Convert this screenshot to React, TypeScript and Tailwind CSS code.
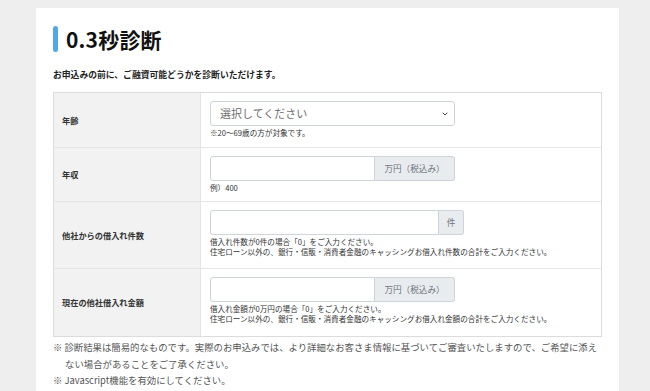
import { ChevronDown } from "lucide-react";

const FONT = "font-['Noto_Sans_CJK_JP','Noto_Sans',sans-serif]";

type Row = {
  label: string;
  height: string;
  kind: "select" | "input";
  inputWidth?: string;
  unit?: string;
  unitWidth?: string;
  help: string[];
};

const ROWS: Row[] = [
  { label: "年齢", height: "h-[54px]", kind: "select", help: ["※20～69歳の方が対象です。"] },
  {
    label: "年収",
    height: "h-[54px]",
    kind: "input",
    inputWidth: "w-[165px]",
    unit: "万円（税込み）",
    unitWidth: "w-[80px]",
    help: ["例）400"],
  },
  {
    label: "他社からの借入れ件数",
    height: "h-[67px]",
    kind: "input",
    inputWidth: "w-[229px]",
    unit: "件",
    unitWidth: "w-[25px]",
    help: [
      "借入れ件数が0件の場合「0」をご入力ください。",
      "住宅ローン以外の、銀行・信販・消費者金融のキャッシングお借入れ件数の合計をご入力ください。",
    ],
  },
  {
    label: "現在の他社借入れ金額",
    height: "h-[68px]",
    kind: "input",
    inputWidth: "w-[165px]",
    unit: "万円（税込み）",
    unitWidth: "w-[80px]",
    help: [
      "借入れ金額が0万円の場合「0」をご入力ください。",
      "住宅ローン以外の、銀行・信販・消費者金融のキャッシングお借入れ金額の合計をご入力ください。",
    ],
  },
];

const App = () => {
  return (
    <div className={`min-h-screen bg-[#eeeeee] pt-[8px] pl-[36px] ${FONT}`}>
      <div className="w-[583px] min-h-[383px] bg-white px-[17px] pt-[18px]">
        {/* Heading */}
        <div className="flex items-center h-[26px]">
          <span className="w-[5px] h-[26px] rounded-[3px] bg-[#4fa9e6]" />
          <h1 className="ml-[8px] text-[21px] leading-[26px] font-bold text-[#111] tracking-[0.2px]">0.3秒診断</h1>
        </div>
        <p className="mt-[17px] text-[8.8px] leading-[12px] font-bold text-[#222]">
          お申込みの前に、ご融資可能どうかを診断いただけます。
        </p>

        {/* Form table */}
        <div className="mt-[11px] border border-[#dcdcdc]">
          {ROWS.map((row, i) => (
            <div key={row.label} className={`flex ${row.height} ${i > 0 ? "border-t border-[#e6e6e6]" : ""}`}>
              <div className="w-[147px] shrink-0 bg-[#f2f2f2] border-r border-[#e4e4e4] flex items-center pl-[8px]">
                <span className="text-[8.2px] font-bold text-[#333]">{row.label}</span>
              </div>
              <div className="flex-1 pl-[9px] pt-[8px]">
                {row.kind === "select" ? (
                  <div className="w-[245px] h-[25px] border border-[#ced4da] rounded-[3px] flex items-center justify-between pl-[9px] pr-[5px]">
                    <span className="text-[11px] text-[#6f6f6f]">選択してください</span>
                    <ChevronDown size={8} strokeWidth={3} className="text-[#444]" />
                  </div>
                ) : (
                  <div className="flex h-[25px]">
                    <div className={`${row.inputWidth} h-full border border-[#ced4da] rounded-l-[3px]`} />
                    <div
                      className={`${row.unitWidth} h-full bg-[#e9ecef] border border-l-0 border-[#ced4da] rounded-r-[3px] flex items-center justify-center text-[8.6px] text-[#6c757d]`}
                    >
                      {row.unit}
                    </div>
                  </div>
                )}
                <div className="mt-[2px] text-[7.6px] leading-[10px] text-[#333]">
                  {row.help.map((h) => (
                    <p key={h}>{h}</p>
                  ))}
                </div>
              </div>
            </div>
          ))}
        </div>

        {/* Notes */}
        <div className="mt-[2px] text-[9.4px] leading-[16.5px] text-[#555]">
          <p className="pl-[12px] -indent-[12px]">
            ※ 診断結果は簡易的なものです。実際のお申込みでは、より詳細なお客さま情報に基づいてご審査いたしますので、ご希望に添えない場合があることをご了承ください。
          </p>
          <p>※ Javascript機能を有効にしてください。</p>
        </div>
      </div>
    </div>
  );
};

export default App;
